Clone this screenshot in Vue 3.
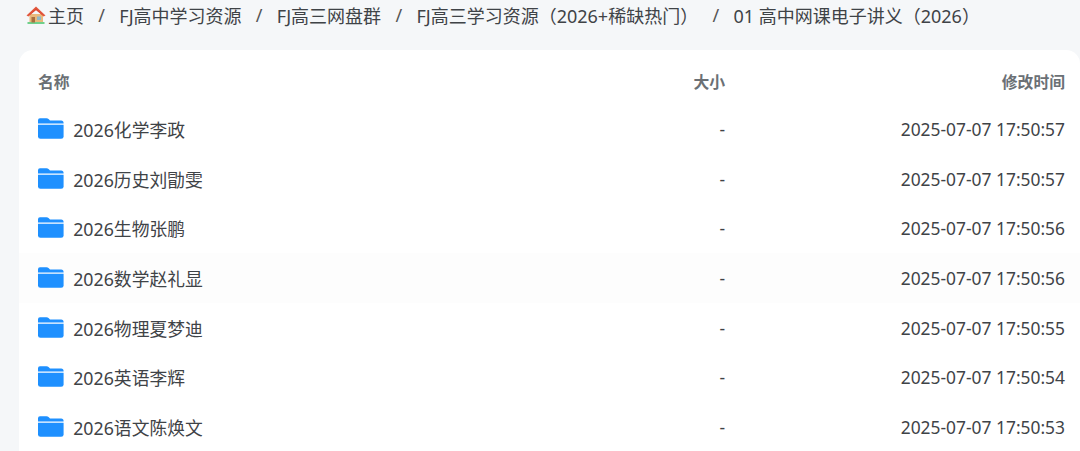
<script setup>
const crumbs = ['FJ高中学习资源', 'FJ高三网盘群', 'FJ高三学习资源（2026+稀缺热门）', '01 高中网课电子讲义（2026）']
const rows = [
  { name: '2026化学李政', time: '2025-07-07 17:50:57' },
  { name: '2026历史刘勖雯', time: '2025-07-07 17:50:57' },
  { name: '2026生物张鹏', time: '2025-07-07 17:50:56' },
  { name: '2026数学赵礼显', time: '2025-07-07 17:50:56', hover: true },
  { name: '2026物理夏梦迪', time: '2025-07-07 17:50:55' },
  { name: '2026英语李辉', time: '2025-07-07 17:50:54' },
  { name: '2026语文陈焕文', time: '2025-07-07 17:50:53' }
]
</script>

<template>
  <div class="page">
    <nav class="crumbs">
      <span class="home">
        <svg class="house" viewBox="0 0 20 20" width="20" height="20">
          <rect x="3.5" y="9" width="13.5" height="8.5" fill="#e9b97c" />
          <rect x="1.5" y="17" width="17" height="2" fill="#6fd08c" />
          <path d="M0.5 10.5 L10 1.5 L19.5 10.5 L17.5 11.5 L10 5 L2.5 11.5 Z" fill="#e2583e" />
          <path d="M10 3.5 L3.5 9.5 L3.5 10 L10 5 L16.5 10 L16.5 9.5 Z" fill="#d9482f" />
          <rect x="5.5" y="12" width="3.5" height="5.5" fill="#a8703f" />
          <rect x="11" y="11.5" width="4" height="3.5" fill="#8fb8c8" />
        </svg>
        <span>主页</span>
      </span>
      <template v-for="c in crumbs" :key="c">
        <span class="sep">/</span>
        <span class="crumb">{{ c }}</span>
      </template>
    </nav>
    <section class="card">
      <div class="row head">
        <div>名称</div>
        <div class="size">大小</div>
        <div class="time">修改时间</div>
      </div>
      <div v-for="r in rows" :key="r.name" class="row item" :class="{ hover: r.hover }">
        <div class="name">
          <svg class="folder" viewBox="0 0 26 21" width="25.6" height="21">
            <path d="M0 5 V2 Q0 0 2 0 H8.5 Q10 0 11 1.2 L12.2 2.4 H23.5 Q26 2.4 26 5 V5.4 H0 Z" fill="#1e90ff" />
            <path d="M0 6.8 H26 V18.5 Q26 21 23.5 21 H2.5 Q0 21 0 18.5 Z" fill="#1e90ff" />
          </svg>
          <span class="label">{{ r.name }}</span>
        </div>
        <div class="size">-</div>
        <div class="time">{{ r.time }}</div>
      </div>
    </section>
  </div>
</template>

<style>
html, body { margin: 0; background: #f5f7f9; }
</style>

<style scoped>
.page {
  height: 451px;
  overflow: hidden;
  box-sizing: border-box;
  padding-left: 19px;
  background: #f5f7f9;
  font-family: "Noto Sans", "Noto Sans CJK SC", sans-serif;
  color: #3f4347;
}
.crumbs {
  display: flex;
  align-items: center;
  height: 30px;
  padding-left: 7px;
  font-size: 18px;
  white-space: nowrap;
}
.home { display: flex; align-items: center; gap: 2px; }
.sep { margin: 0 14.3px; color: #555; }
.card {
  margin-top: 20px;
  background: #fff;
  border-radius: 14px 14px 0 0;
}
.row {
  display: grid;
  grid-template-columns: 1fr 200px 340px;
  align-items: center;
  padding: 0 15px 0 19px;
}
.head {
  height: 46px;
  padding-top: 8px;
  font-size: 15.8px;
  font-weight: 700;
  color: #6b7075;
}
.item {
  height: 49.7px;
  font-size: 17.4px;
}
.item.hover { background: #fdfdfd; }
.name { display: flex; align-items: center; gap: 9.6px; }
.label { font-size: 17.8px; }
.folder { flex: none; margin-top: -1px; }
.size, .time { text-align: right; }
</style>
